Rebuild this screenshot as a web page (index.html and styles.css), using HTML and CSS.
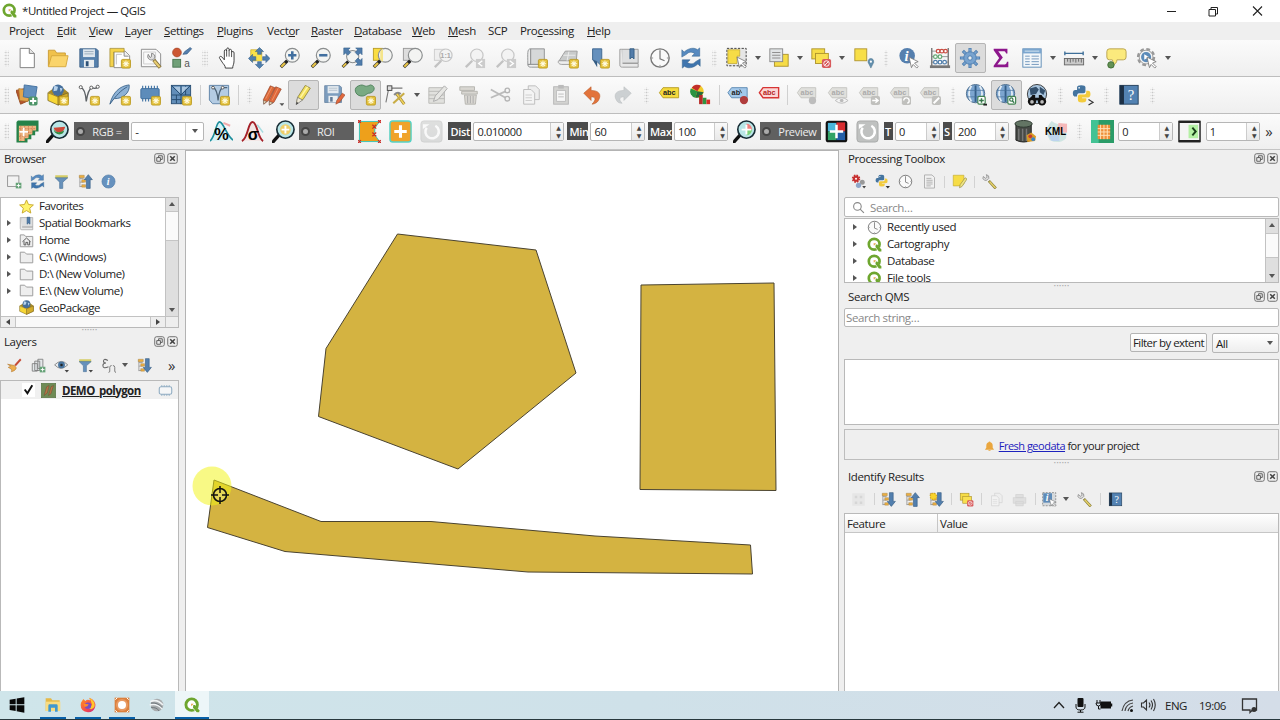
FILE: index.html
```html
<!DOCTYPE html>
<html lang="en">
<head>
<meta charset="utf-8">
<title>*Untitled Project — QGIS</title>
<link rel="stylesheet" href="styles.css">
</head>
<body>
<svg class="sprite" width="0" height="0">
<defs>
<linearGradient id="gf" x1="0" y1="0" x2="1" y2="1"><stop offset="0" stop-color="#ff9a1f"/><stop offset=".6" stop-color="#f5484b"/><stop offset="1" stop-color="#c62a86"/></linearGradient>
<g id="badge"><rect x="13.500" y="13.500" width="10" height="9.500" rx="1.500" fill="#e3c03a" stroke="#b8961c" stroke-width=".9"/><path d="M18.500 14.800v7M15 18.300h7M16 15.800l5 5M21 15.800l-5 5" stroke="#fffbe0" stroke-width="1.100"/></g>
<g id="lens"><path d="M2 22l7-7" stroke="#333" stroke-width="3.600"/><path d="M2.500 21.500l4-4" stroke="#e8c547" stroke-width="2.400"/><path d="M7 17l2-2" stroke="#222" stroke-width="2.600"/><circle cx="14.500" cy="9" r="7.600" fill="#f3f4f2" stroke="#8a8d8e" stroke-width="1.300"/></g>
<g id="handglass"><path d="M2 22l7-7" stroke="#c2c2c2" stroke-width="2.500"/><circle cx="14" cy="9" r="6.800" fill="#f3f3f3" stroke="#c6c6c6" stroke-width="1.300"/></g>
<g id="cursor"><path d="M12 11l10 5-4 1.500 4 4-1.500 1.500-4-4-1.800 3.500z" fill="#fff" stroke="#777" stroke-width=".9"/></g>
<g id="globe"><circle cx="11.500" cy="10.500" r="10" fill="#7ca5cf" stroke="#47698a"/><path d="M7 2C3.500 7 3.500 14 7 19M16 2c3.500 5 3.500 12 0 17" fill="none" stroke="#e3edf5" stroke-width="2"/><path d="M11.500 1.500v18" stroke="#345e87" stroke-width="2"/><path d="M2 7h19M2 14h19" stroke="#456f97" stroke-width=".7"/></g>

<symbol id="q" viewBox="0 0 24 24"><circle cx="11.500" cy="11.500" r="8.600" fill="#fff" stroke="#6ea62f" stroke-width="4.300"/><path d="M13 10.500l10.500 9.500v3.500h-5L10.500 14z" fill="#fff"/><path d="M14 12l2.500 0 6.500 8v3h-4L13.500 16z" fill="#6ea62f"/><path d="M10.500 10h4l-3.500 4z" fill="#e7a44a"/></symbol>
<symbol id="new" viewBox="0 0 24 24"><path d="M4.500 1.500h10l5.500 5.500v15.500h-15.500z" fill="#fff" stroke="#777"/><path d="M14.500 1.500v5.500h5.500" fill="#e5e5e5" stroke="#777"/></symbol>
<symbol id="open" viewBox="0 0 24 24"><path d="M1.500 21V3.500h7l2 3h9.500V10" fill="#f0c14b" stroke="#c99a32"/><path d="M1.500 21.500L5 9.500h18l-2.500 12z" fill="#fad46b" stroke="#d4a63c"/></symbol>
<symbol id="save" viewBox="0 0 24 24"><path d="M2 2h18l2 2v18H2z" fill="#5580ac" stroke="#3f638a"/><rect x="5.500" y="2.500" width="13" height="8.500" fill="#dfe7ee"/><path d="M7 5h10M7 7.500h10" stroke="#96a8b8"/><rect x="6.500" y="14" width="11" height="8" fill="#e9edf0"/><rect x="8.500" y="15.500" width="3" height="5.500" fill="#2f5278"/></symbol>
<symbol id="layout" viewBox="0 0 24 24"><path d="M5.500 4.500h12l5 5v13h-17z" fill="#fff" stroke="#888"/><path d="M1 1.500h15.500v4H5v16H1z" fill="#f5d34c" stroke="#a08a33" stroke-width=".8"/><path d="M16.500 5v5h5" fill="#eee" stroke="#888"/><path d="M8 8h6M8 8v11" stroke="#bbb"/><use href="#badge"/></symbol>
<symbol id="layoutm" viewBox="0 0 24 24"><path d="M1.500 2.500h16l5 5v14h-21z" fill="#fafafa" stroke="#888"/><path d="M4 5.500h13v13H4z" fill="none" stroke="#ccc"/><path d="M15 14l7 8.500" stroke="#84703a" stroke-width="4"/><path d="M15.500 15l6 7" stroke="#e9ce72" stroke-width="2.200"/><path d="M9 8c-2 4 1.500 7 5 6l2-2c1-3-1-5-3.500-5v3.500l-1.500 1z" fill="#ddd" stroke="#777" stroke-width=".9"/></symbol>
<symbol id="style" viewBox="0 0 24 24"><circle cx="6.500" cy="6" r="4.800" fill="#cc5733" stroke="#a13f20" stroke-width=".7"/><path d="M13 8l2-3 6-4.500 1.500 1.500-5 5.500z" fill="#557fae" stroke="#355b82" stroke-width=".7"/><rect x="2" y="13.500" width="8.500" height="8.500" fill="#70a078" stroke="#477450"/><text x="14.500" y="22" class="glyph gray">a</text></symbol>
<symbol id="hand" viewBox="0 0 24 24"><path d="M8 14V4.500c0-2 2.500-2 2.500 0V2.500c0-2 2.700-2 2.700 0V4c0-2 2.700-2 2.700 0v2c.5-1.700 2.700-1.500 2.700.5V15c0 4-1.500 5-1.500 8h-8c0-3-2-4-3.500-6.500L3 12.500c-1.200-2 1-3 2.500-1.500z" fill="#fff" stroke="#333" stroke-width="1"/><path d="M10.500 4.500v6M13.200 4v6.500M15.900 6v5" stroke="#333" stroke-width=".9"/></symbol>
<symbol id="pansel" viewBox="0 0 24 24"><path d="M3 3h12v12H3z" fill="#fbe24a" stroke="#c9a92b" stroke-width=".8"/><path d="M12.500.5l4.500 4.500h-2.500v3h-4V5H8zM12.500 23.500L8 19h2.500v-3h4v3H17zM.5 12.500L5 8v2.500h3.500v4H5V17zM24 12.500L19.500 8v2.500H16v4h3.500V17z" fill="#4f7eae" stroke="#315d87" stroke-width=".6"/><path d="M10 10h5v5h-5z" fill="#fbe24a"/></symbol>
<symbol id="zin" viewBox="0 0 24 24"><use href="#lens"/><path d="M14.500 4.500v9M10 9h9" stroke="#416f9f" stroke-width="2.800"/></symbol>
<symbol id="zout" viewBox="0 0 24 24"><use href="#lens"/><path d="M10 9h9" stroke="#416f9f" stroke-width="2.800"/></symbol>
<symbol id="zfull" viewBox="0 0 24 24"><g transform="translate(0 2.500) scale(.88)"><use href="#lens"/></g><path d="M3 1h7L8 3l2.500 3-3 3L5 6.500 3 8.500zM23 1h-7l2 2-2.500 3 3 3L21 6.500l2 2zM23 20h-7l2-2-2.500-3 3-3 2.500 2.500 2-2z" fill="#4f7cab" stroke="#315d87" stroke-width=".6"/></symbol>
<symbol id="zsel" viewBox="0 0 24 24"><rect x="1.500" y="1.500" width="10" height="13" fill="#fadd41" stroke="#b99c28"/><use href="#lens"/><path d="M9 4.500q2-2.500 3-2.500v14q-2-.5-3-2.500z" fill="#f5e58a"/></symbol>
<symbol id="zlay" viewBox="0 0 24 24"><rect x="1.500" y="1.500" width="12" height="13" fill="#ddd" stroke="#999"/><use href="#lens"/></symbol>
<symbol id="znat" viewBox="0 0 24 24"><rect x="1.500" y="2.500" width="11" height="12" fill="#eee" stroke="#ccc"/><use href="#handglass"/><text x="8" y="12" class="glyph tiny dim">1:1</text></symbol>
<symbol id="zprev" viewBox="0 0 24 24"><use href="#handglass"/><rect x="13" y="13" width="10" height="10" fill="#ccc"/><path d="M20 15l-4 3 4 3" stroke="#fff" fill="none" stroke-width="1.500"/></symbol>
<symbol id="znext" viewBox="0 0 24 24"><use href="#handglass"/><rect x="13" y="13" width="10" height="10" fill="#ccc"/><path d="M16 15l4 3-4 3" stroke="#fff" fill="none" stroke-width="1.500"/></symbol>
<symbol id="newmap" viewBox="0 0 24 24"><path d="M5 2h15v17H5z" fill="#d6d8d9" stroke="#8e9192"/><path d="M5 2c-4 0-3 5-3 17h3zM2 19c0 3 2 3 4 3h9v-3z" fill="#eee" stroke="#8e9192"/><use href="#badge"/></symbol>
<symbol id="new3d" viewBox="0 0 24 24"><path d="M9 4.500h13l-1 11H2z" fill="#c9cbcb" stroke="#999"/><path d="M2 15c-2 2 1 4 3 4h11v-4z" fill="#eee" stroke="#999"/><path d="M7 9h13M13 5l-2 10" stroke="#eee"/><use href="#badge"/></symbol>
<symbol id="newbm" viewBox="0 0 24 24"><path d="M5 2h10v19l-5-5-5-2z" fill="#6590bd" stroke="#3c658e"/><path d="M5 14l5 8V16z" fill="#335b82"/><use href="#badge"/></symbol>
<symbol id="bm" viewBox="0 0 24 24"><path d="M4 2.500h18v15H4z" fill="#dedfe0" stroke="#999"/><path d="M4 2.500H2v17c0 2 1 2.500 3 2.500h17v-4H5" fill="#e8e8e8" stroke="#999"/><path d="M13 2h4.500v11l-2.200-2-2.300 2z" fill="#537daa" stroke="#355f86"/></symbol>
<symbol id="clock" viewBox="0 0 24 24"><circle cx="12" cy="12" r="10" fill="#fafafa" stroke="#777" stroke-width="1.500"/><path d="M12 4v9l5 2" fill="none" stroke="#777" stroke-width="1.300"/><path d="M12 2.500v2M12 19.500v2M2.500 12h2M19.500 12h2" stroke="#888"/></symbol>
<symbol id="refresh" viewBox="0 0 24 24"><path d="M2 11V3l2.500 2.500C10 .5 16 .5 19 3l2.500-2V10H13l3-3c-4-2-6-2-9 1z" fill="#578ac0" stroke="#37658f" stroke-width=".6"/><path d="M22 13v8l-2.500-2.500C14 23.500 8 23.500 5 21l-2.500 2V14H11l-3 3c4 2 6 2 9-1z" fill="#3f75ae" stroke="#37658f" stroke-width=".6"/></symbol>
<symbol id="sel" viewBox="0 0 24 24"><rect x="1" y="1.500" width="21" height="19" fill="#e6e6e6" stroke="#333" stroke-dasharray="2.500 1.500"/><path d="M2 3h13v7h-3v8H2z" fill="#f6dc46" stroke="#bca126" stroke-width=".7"/><use href="#cursor"/></symbol>
<symbol id="selval" viewBox="0 0 24 24"><rect x="7" y="8" width="15" height="13" fill="#f6dc46" stroke="#ad932c"/><rect x="2" y="2" width="14" height="14" fill="#e1e4e6" stroke="#888"/><path d="M4.500 6h9M4.500 9h9M4.500 12h9" stroke="#888"/></symbol>
<symbol id="desel" viewBox="0 0 24 24"><rect x="2" y="2" width="14" height="11" fill="#f6dc46" stroke="#ad932c"/><rect x="6" y="7" width="14" height="11" fill="#f9e04f" stroke="#ad932c"/><rect x="13" y="13" width="10" height="10" rx="2" fill="#d85a5c"/><circle cx="18" cy="18" r="3" fill="none" stroke="#fff"/><path d="M16 20l4-4" stroke="#fff"/></symbol>
<symbol id="selloc" viewBox="0 0 24 24"><rect x="2" y="2" width="13" height="13" fill="#f8df48" stroke="#b19430"/><path d="M19.500 23l-3-6c-1-6 7-6 6 0z" fill="#638fad" stroke="#406c88" stroke-width=".5"/><circle cx="19.500" cy="16" r="1.200" fill="#fff"/></symbol>
<symbol id="info" viewBox="0 0 24 24"><circle cx="10" cy="9.500" r="8.500" fill="#557fae"/><text x="7" y="15" class="glyph serif white">i</text><use href="#cursor"/></symbol>
<symbol id="abacus" viewBox="0 0 24 24"><path d="M3 1v20M21 1v20" stroke="#777" stroke-width="1.500"/><path d="M1 21.500h22" stroke="#777" stroke-width="3"/><path d="M3 4.500h18M3 10.500h18M3 16.500h18" stroke="#777" stroke-width=".8"/><g fill="#fff" stroke-width="1.400"><g stroke="#c94d42"><circle cx="10" cy="4.500" r="2"/><circle cx="18" cy="4.500" r="2"/><circle cx="14" cy="4.500" r="2"/></g><g stroke="#63a873"><circle cx="7" cy="10.500" r="2"/><circle cx="12" cy="10.500" r="2"/></g><g stroke="#517fac"><circle cx="7" cy="16.500" r="2"/><circle cx="12" cy="16.500" r="2"/><circle cx="17" cy="16.500" r="2"/></g></g></symbol>
<symbol id="gear" viewBox="0 0 24 24"><path d="M12 1v22M1 12h22M4.200 4.200l15.600 15.600M19.800 4.200L4.200 19.800" stroke="#4f7fb0" stroke-width="3.400"/><path d="M12 2v20M2 12h20M4.900 4.900l14.200 14.200M19.100 4.900L4.900 19.100" stroke="#78a3cf" stroke-width="1.800"/><circle cx="12" cy="12" r="6.800" fill="#78a3cf" stroke="#4f7fb0"/><circle cx="12" cy="12" r="2.400" fill="#e8ecef" stroke="#4679ad"/></symbol>
<symbol id="sigma" viewBox="0 0 24 24"><path d="M4 2h15v5h-1.500c-.5-2-1-2.500-3-2.500H9l5 7-6 7.500h7c2 0 3-.5 3.500-3H20v6H4v-1.500L10 12 4 3.500z" fill="#8d178c"/></symbol>
<symbol id="table" viewBox="0 0 24 24"><rect x="2" y="2" width="20" height="20" fill="#f3f7fa" stroke="#5c89b4"/><path d="M2 2h20v5H2z" fill="#7ba6cf"/><path d="M4 4.500h16" stroke="#dceaf4"/><path d="M4.500 10h5M11.500 10h8M4.500 13h5M11.500 13h8M4.500 16h5M11.500 16h8M4.500 19h5M11.500 19h8" stroke="#6b93ba"/></symbol>
<symbol id="ruler" viewBox="0 0 24 24"><path d="M2 7h20M2 5v4M22 5v4" stroke="#3e6f99" stroke-width="1.500"/><rect x="1.500" y="12.500" width="21" height="7" fill="#c9c9c9" stroke="#666"/><path d="M5 13v3M8 13v4M11 13v3M14 13v4M17 13v3M20 13v4" stroke="#666"/></symbol>
<symbol id="tip" viewBox="0 0 24 24"><path d="M5 2h15q3 0 3 3v6q0 3-3 3h-7c0 3-2 5-5 6 1-3 1-4 0-6H5q-3 0-3-3V5q0-3 3-3z" fill="#fbea7d" stroke="#b7a14d"/><circle cx="6.500" cy="19.500" r="3.500" fill="#639155" stroke="#406d35"/></symbol>
<symbol id="action" viewBox="0 0 24 24"><circle cx="11" cy="11" r="8.500" fill="#eee" stroke="#999" stroke-width="3" stroke-dasharray="4 2.675"/><circle cx="11" cy="11" r="7.500" fill="#f3f3f3" stroke="#999"/><circle cx="11" cy="11" r="5.500" fill="#5c8bb9"/><path d="M9 8l5 3-5 3z" fill="#fff"/><use href="#cursor"/></symbol>

<symbol id="dsm" viewBox="0 0 24 24"><path d="M0 7l10-2 4 13-9 4z" fill="#b5562c" stroke="#96461e"/><path d="M3 5l13 2-3 12-9-1z" fill="#e3a54a" stroke="#a8722c" stroke-width=".7"/><path d="M9 1l14 2-2 13-13-2z" fill="#6390be" stroke="#416f9e"/><rect x="14" y="13.500" width="9.500" height="10" rx="2" fill="#4c9467"/><path d="M18.700 15v7M15.200 18.500h7" stroke="#fff" stroke-width="2"/></symbol>
<symbol id="gpkg" viewBox="0 0 24 24"><path d="M1 9l6-4h11l5 4-11 5z" fill="#a98a25"/><circle cx="12" cy="6.800" r="6.300" fill="#456f9c"/><path d="M8 2l4 1-1 4-4 1zM14 4l3 1-2 4z" fill="#b8d3ec"/><path d="M1 9.500l11 4.500 11-4.500v8.500l-11 5-11-5z" fill="#f6d636" stroke="#735e20" stroke-width=".8"/><path d="M12 14v9l11-5V9.500z" fill="#d3ad2b" stroke="#735e20" stroke-width=".8"/></symbol>
<symbol id="gpkgn" viewBox="0 0 24 24"><use href="#gpkg" width="24" height="24"/><use href="#badge"/></symbol>
<symbol id="shp" viewBox="0 0 24 24"><path d="M3 4q5 1 6 15Q11 6 15 4M15 4q4 2 7-1" fill="none" stroke="#5e6367" stroke-width="1.500"/><g fill="#fff" stroke="#555"><circle cx="3" cy="3.500" r="1.700"/><circle cx="14.500" cy="4" r="1.700"/><circle cx="21.500" cy="3" r="1.700"/></g><use href="#badge"/></symbol>
<symbol id="feather" viewBox="0 0 24 24"><path d="M1 22C4 9 12 2 22 1c1 9-7 15-16 15" fill="#8db2d6" stroke="#41698f"/><path d="M1 22C8 12 13 7 20 3" fill="none" stroke="#385d82"/><use href="#badge"/></symbol>
<symbol id="chip" viewBox="0 0 24 24"><path d="M4 2v17M7.200 2v17M10.400 2v17M13.600 2v17M16.800 2v17M20 2v17" stroke="#4879a8" stroke-width="1.300"/><rect x="2" y="5" width="20" height="11" rx="1" fill="#5d8cba" stroke="#416f9e"/><use href="#badge"/></symbol>
<symbol id="mesh" viewBox="0 0 24 24"><rect x="1.500" y="1.500" width="21" height="20" fill="#628eb9" stroke="#294e74"/><path d="M12 2v20M2 12h20M2 2l10 10M12 12l10-10M7 12v9M17 2v10M2 17h10" stroke="#244a6e"/><path d="M4 3h7v7zM13 3h7l-7 7z" fill="#a9c5df"/><use href="#badge"/></symbol>
<symbol id="virt" viewBox="0 0 24 24"><path d="M1.500 1.500h21v20H5l-3.500-4z" fill="#b4cce3" stroke="#5b80a5"/><path d="M6 4q4 2 5 14 1-12 5-14h5" fill="none" stroke="#4d6478" stroke-width="1.400"/><g fill="#fff" stroke="#555"><circle cx="5.500" cy="4" r="1.500"/><circle cx="16" cy="4" r="1.500"/></g><use href="#badge"/></symbol>
<symbol id="pencils" viewBox="0 0 24 24"><g stroke="#8d3c1f" stroke-width=".7"><path d="M1.500 17L9 2l5 2-7 14-5 4z" fill="#dd6a3a"/><path d="M8 18l7-15 6 2.500-8 14.500-5 3z" fill="#e0673a"/></g><path d="M4 16l7-13M11 18l7-14" stroke="#f0966b" stroke-width="1"/><path d="M1.500 18l3.500 1-3.300 3zM8 19l4 1.500-4 2.500z" fill="#e9d9b8" stroke="#555" stroke-width=".5"/><path d="M19 21h5.500l-2.700 3z" fill="#555"/></symbol>
<symbol id="pencil" viewBox="0 0 24 24"><path d="M5 20l1.500-6L14.500 1.500l5.500 3L12 17z" fill="#f2df5b" stroke="#958c45"/><path d="M9 15L17 3" stroke="#fff5a2" stroke-width="1.500"/><path d="M4.500 22.500l1.500-8 5.500 3z" fill="#eee9d8" stroke="#777" stroke-width=".8"/><path d="M4.500 22.500l.6-3 2 1.200z" fill="#333"/></symbol>
<symbol id="savee" viewBox="0 0 24 24"><g opacity=".75"><use href="#save" width="22" height="22"/></g><path d="M14 22l1-4 6-8 3 2-6 8z" fill="#e1683d" stroke="#96411f" stroke-width=".6"/></symbol>
<symbol id="addpoly" viewBox="0 0 24 24"><path d="M5 2c7-3 5 3 13-1 6 1 5 8-1 9-4 0-4 4-10 3C1 12-1 4 5 2z" fill="#79aa83" stroke="#4e805b"/><use href="#badge"/></symbol>
<symbol id="vertex" viewBox="0 0 24 24"><path d="M4 5L1 20M5 4.500h14" stroke="#777" stroke-width="1.200"/><rect x="2.500" y="2" width="5" height="5" fill="#ddd" stroke="#444"/><path d="M10 12q4-4 7-1" fill="none" stroke="#888" stroke-width="2.500"/><path d="M13 11l8 11" stroke="#9b8137" stroke-width="3.200"/><path d="M13 11l8 11" stroke="#efd25a" stroke-width="1.800"/><path d="M21 10L9 21" stroke="#c9ad45" stroke-width="2.300"/></symbol>
<symbol id="multi" viewBox="0 0 24 24"><path d="M2 4h17v17H2zM2 8h17M2 12h17M2 16h17" fill="#e1e1de" stroke="#b9b9b6"/><path d="M7 19l2-6L19 2l3 3-10 12z" fill="#e6e6e3" stroke="#aaa"/></symbol>
<symbol id="trash" viewBox="0 0 24 24"><path d="M2 3h16v4H2zM4 8h17v3H4zM7 12h13l-1 10H8z" fill="#d9d7d2" stroke="#b5b3ae"/><path d="M10.500 13v8M13.500 13v8M16.500 13v8" stroke="#aaa"/></symbol>
<symbol id="cut" viewBox="0 0 24 24"><path d="M2 6l16 9M2 15l16-7" stroke="#bbb" stroke-width="2"/><circle cx="20" cy="7" r="2.500" fill="none" stroke="#b5b5b5" stroke-width="1.500"/><circle cx="20" cy="16" r="2.500" fill="none" stroke="#b5b5b5" stroke-width="1.500"/></symbol>
<symbol id="copy" viewBox="0 0 24 24"><path d="M9 2h8l4 4v11H9z" fill="#eee" stroke="#bbb"/><path d="M4 6h8l4 4v12H4z" fill="#f4f4f4" stroke="#bbb"/><path d="M6 12h7M6 15h7M6 18h7" stroke="#ccc"/></symbol>
<symbol id="paste" viewBox="0 0 24 24"><rect x="4" y="3" width="16" height="19" fill="#d4d4d2" stroke="#b5b5b5"/><path d="M7 7h10v12H7z" fill="#f6f6f6" stroke="#bbb"/><rect x="9" y="1" width="6" height="4" fill="#bbb"/><path d="M9 11h6M9 14h6" stroke="#bbb"/></symbol>
<symbol id="undo" viewBox="0 0 24 24"><path d="M3 10l8-7v4c8 0 12 4 8 11-1 2-4 4-7 4 5-5 4-8-1-8v4z" fill="#e2733b" stroke="#b5551f" stroke-width=".6"/></symbol>
<symbol id="redo" viewBox="0 0 24 24"><path d="M21 10l-8-7v4c-8 0-12 4-8 11 1 2 3 3 6 3-4-4-3-7 2-7v4z" fill="#ccd0d2" stroke="#b9bdbf" stroke-width=".6"/></symbol>
<symbol id="labs" viewBox="0 0 24 24"><path d="M1.500 9.500l4-5.500h17v11H5.500z" fill="#f5da3c" stroke="#b69c22"/><text x="5.500" y="12" class="glyph tiny">abc</text></symbol>
<symbol id="diag" viewBox="0 0 24 24"><circle cx="9" cy="8" r="7" fill="#f1cb2d"/><path d="M9 8L2 5a7 7 0 0 0 5 10z" fill="#2b9442"/><path d="M9 8L3 4a7 7 0 0 1 10-2z" fill="#c22e2a"/><path d="M9 8L7 15q5 1 9-6z" fill="#256d3c"/><path d="M11 12h4v10h-4z" fill="#b72a26"/><path d="M15 15h4v7h-4z" fill="#2f9440"/><path d="M19 17h4v5h-4z" fill="#d62f28"/></symbol>
<symbol id="labpin" viewBox="0 0 24 24"><path d="M1 9.500l4-5.500h17v11H5z" fill="#a3c9eb" stroke="#5a88b1"/><text x="5" y="12" class="glyph tiny">ab</text><path d="M16 10l-2-4" stroke="#444"/><circle cx="18.500" cy="17.500" r="4.500" fill="#b03c3c"/></symbol>
<symbol id="labred" viewBox="0 0 24 24"><path d="M1.500 9.500l4-5.500h17v11H5.500z" fill="#fbd6d5" stroke="#d73534" stroke-width="1.500"/><text x="5.500" y="12" class="glyph tiny red">abc</text></symbol>
<symbol id="labdim" viewBox="0 0 24 24"><path d="M1.500 9.500l4-5.500h16v11H5.500z" fill="#e0e0dc" stroke="#c5c5c1"/><text x="5" y="12" class="glyph tiny dim">abc</text></symbol>
<symbol id="labpind" viewBox="0 0 24 24"><use href="#labdim" width="24" height="24"/><circle cx="18" cy="18" r="4" fill="#bdbdbd"/></symbol>
<symbol id="labeye" viewBox="0 0 24 24"><use href="#labdim" width="24" height="24"/><path d="M9 18q7-6 14 0-7 6-14 0" fill="#f3f3f3" stroke="#bbb"/><circle cx="16" cy="18" r="2" fill="#bbb"/></symbol>
<symbol id="labmv" viewBox="0 0 24 24"><use href="#labdim" width="24" height="24"/><rect x="14" y="13" width="10" height="10" rx="2" fill="#c0c0bd"/><path d="M15.500 18h6M19 15.500l3 2.500-3 2.500" stroke="#fff" stroke-width="1.500" fill="none"/></symbol>
<symbol id="labrot" viewBox="0 0 24 24"><use href="#labdim" width="24" height="24"/><rect x="14" y="13" width="10" height="10" rx="2" fill="#c0c0bd"/><path d="M20 21a3 3 0 1 0-4-3" stroke="#fff" stroke-width="1.500" fill="none"/></symbol>
<symbol id="labed" viewBox="0 0 24 24"><use href="#labdim" width="24" height="24"/><rect x="14" y="13" width="10" height="10" rx="2" fill="#c0c0bd"/><path d="M16 21l6-6" stroke="#fff" stroke-width="2"/></symbol>
<symbol id="globep" viewBox="0 0 24 24"><use href="#globe"/><rect x="14" y="13.500" width="8" height="8.500" rx="1.500" fill="#fff" stroke="#438452" stroke-width="1.300"/><path d="M18 15.500v5M15.500 18h5" stroke="#35774b" stroke-width="1.600"/><path d="M20 22.500h4" stroke="#222" stroke-width="2"/></symbol>
<symbol id="globes" viewBox="0 0 24 24"><use href="#globe"/><rect x="14" y="13.500" width="8.500" height="8.500" rx="1.500" fill="#fff" stroke="#438452" stroke-width="1.300"/><circle cx="17.800" cy="17" r="1.800" fill="none" stroke="#35774b" stroke-width="1.300"/><path d="M19 18.500l2 2" stroke="#35774b" stroke-width="1.500"/></symbol>
<symbol id="globeb" viewBox="0 0 24 24"><circle cx="12" cy="11" r="10.500" fill="#a9c5de" stroke="#333"/><path d="M4 5l7-2 3 3-3 5-6 1zM15 3l6 4-2 5-4-3z" fill="#34506c"/><circle cx="6.500" cy="19" r="4.500" fill="#111"/><circle cx="17.500" cy="19" r="4.500" fill="#111"/><path d="M7 12h3v3h4v-3h3l4 6H3z" fill="#111"/><circle cx="6.500" cy="19.500" r="2" fill="#bbb"/><circle cx="17.500" cy="19.500" r="2" fill="#bbb"/></symbol>
<symbol id="py" viewBox="0 0 24 24"><path d="M6 7V4q0-2.500 5-2.500t5 2.500v5q0 2-2.500 2H8q-2 0-2 3v1H4q-3 0-3-4t3-4h7" fill="#44749f"/><path d="M17 8h2q3 0 3 4t-3 4h-7v1h5v2q0 3-5 3t-5-3v-4q0-2.500 2.500-2.500H15q2 0 2-3z" fill="#f3cb3d"/><circle cx="8.500" cy="4.500" r="1" fill="#fff"/></symbol>
<symbol id="pyc" viewBox="0 0 24 24"><use href="#py" width="22" height="22"/><path d="M18 17l5 3-5 3" fill="none" stroke="#333" stroke-width="1.200"/></symbol>
<symbol id="help" viewBox="0 0 24 24"><rect x="2" y="1.500" width="20" height="20.500" fill="#5382b2" stroke="#223e59"/><path d="M2 1.500h4.500v20.500H2z" fill="#1d3045"/><text x="10.500" y="17" class="glyph quest white">?</text></symbol>

<symbol id="scp" viewBox="0 0 24 24"><path d="M2 .5h21.500V12H20v4h-4v4h-4v3.500H.5V2z" fill="#258249"/><path d="M3 6h18v5h-4v4h-4v4H9v3H3z" fill="#efb681"/><path d="M5 6v16M9 6v16M13 6v11M17 6v7M3 9h18M3 13h13M3 17h10" stroke="#c87950" stroke-width=".8" stroke-dasharray="2 1"/><path d="M8 8v9M3.500 12.500h9" stroke="#fff" stroke-width="1.800"/></symbol>
<symbol id="glass" viewBox="0 0 24 24"><path d="M0 24l8-9" stroke="#111" stroke-width="3.500"/><circle cx="14" cy="10" r="9" fill="#b9e6e7" stroke="#172c35" stroke-width="1.700"/></symbol>
<symbol id="scpz" viewBox="0 0 24 24"><use href="#glass" width="24" height="24"/><path d="M8 8l12-1q-1 6-7 6-4-1-5-5z" fill="#cf4a3a"/><path d="M8 10q3 5 11 1-1 4-5 4-5 0-6-5z" fill="#398a42"/></symbol>
<symbol id="pct" viewBox="0 0 24 24"><path d="M0 22C6 17 6 2 10 2s7 14 14 19z" fill="#d5f3f6"/><path d="M0 22C6 17 6 2 10 2s7 14 14 19" fill="none" stroke="#1d8d9b" stroke-width="1.700"/><path d="M14 3l7 3" stroke="#f0a9a9" stroke-width="2"/><text x="4.500" y="20.500" class="glyph big">%</text></symbol>
<symbol id="std" viewBox="0 0 24 24"><path d="M1 22C8 18 7 2 12 2s5 16 11 20" fill="#f3e6e5" stroke="#a42028" stroke-width="2"/><path d="M17 5l6 8" stroke="#a5dce1" stroke-width="1.500"/><text x="7" y="20.500" class="glyph big">σ</text></symbol>
<symbol id="roiz" viewBox="0 0 24 24"><use href="#glass" width="24" height="24"/><circle cx="14" cy="10" r="5.500" fill="#efcf6a"/><path d="M14 6v8M10 10h8" stroke="#fff" stroke-width="2"/></symbol>
<symbol id="roi" viewBox="0 0 24 24"><path d="M1.500 1.500h21l-5 7v7l5 7h-21z" fill="#eea01b" stroke="#36c5bc"/><path d="M0 0l3 3M3 0L0 3M0 21l3 3M3 21l-3 3M21 0l3 3M24 0l-3 3M15 5l4 4M19 5l-4 4M15 13l4 4M19 13l-4 4M21 21l3 3M24 21l-3 3" stroke="#cc2c26" stroke-width="1.300"/></symbol>
<symbol id="plus" viewBox="0 0 24 24"><rect x="1" y="1" width="22" height="22" rx="3" fill="#f0a329" stroke="#55d2c5" stroke-width="1.500"/><path d="M12 5.500v13M5.500 12h13" stroke="#fff" stroke-width="3.200"/></symbol>
<symbol id="redo2" viewBox="0 0 24 24"><rect x="1" y="1" width="22" height="22" rx="3" fill="#bfc1c0" stroke="#a9abaa"/><path d="M7 8a7 7 0 1 0 9-2" fill="none" stroke="#fff" stroke-width="2.600"/><path d="M3 9.500V4.500h7z" fill="#fff"/></symbol>
<symbol id="prez" viewBox="0 0 24 24"><use href="#glass" width="24" height="24"/><path d="M14 10h6q-1 6-6 6z" fill="#7cd279"/><path d="M14 10h6q-1-6-6-6z" fill="#ef8280"/><path d="M14 5v10M9 10h10" stroke="#fff" stroke-width="2"/></symbol>
<symbol id="rgb" viewBox="0 0 24 24"><rect x=".7" y=".7" width="22.600" height="22.600" rx="3" fill="#111"/><path d="M3 3h9v9H3z" fill="#49b5da"/><path d="M12 2.500h9V12h-9z" fill="#d72d30"/><path d="M3 12h9v9H3z" fill="#33a466"/><path d="M12 12h9v9h-9z" fill="#225ea7"/><path d="M12 5v14M5 12h14" stroke="#fff" stroke-width="2.600"/></symbol>
<symbol id="db" viewBox="0 0 24 24"><path d="M2 4v17q8 4 16 0V4" fill="#474a46" stroke="#222"/><ellipse cx="10" cy="4" rx="9" ry="3.500" fill="#637564" stroke="#2e3830"/><path d="M5 9v12M9 9v13M13 9v13" stroke="#777" stroke-width="1.500"/><path d="M13 16l5-3 5 4-1 5-8 1z" fill="#d99b25"/><circle cx="17" cy="17" r="2" fill="#c33a32"/><circle cx="20" cy="20" r="2" fill="#3983c9"/></symbol>
<symbol id="kml" viewBox="0 0 24 24"><path d="M7 1q8 6 16 3l-1 15q-7 7-17 2Q-2 10 7 1z" fill="#cfe5e2"/><path d="M14 3l9 1v9H13z" fill="#f5b9ba"/><path d="M3 15h12v7H7z" fill="#bdd4ee"/><text x="0" y="16" class="glyph kml" textLength="22" lengthAdjust="spacingAndGlyphs">KML</text></symbol>
<symbol id="gridi" viewBox="0 0 24 24"><rect width="24" height="24" fill="#2a9c68"/><path d="M0 0h8v24H0z" fill="#43c294"/><rect x="7" y="5" width="13" height="15" fill="#ef8f39"/><path d="M10 5v15M13.500 5v15M17 5v15M7 9h13M7 12.500h13M7 16h13" stroke="#ffe3b9"/></symbol>
<symbol id="go" viewBox="0 0 24 24"><rect x="1" y="1.500" width="22" height="21" fill="#f4f4f4" stroke="#222" stroke-width="1.500"/><path d="M1 2h22M1 22h22" stroke="#222" stroke-width="2.500"/><path d="M11 5h10v14H11z" fill="#b4f0a4"/><path d="M15 8l3.500 4-3.500 4" fill="none" stroke="#183f19" stroke-width="2"/></symbol>

<symbol id="addl" viewBox="0 0 24 24"><rect x="1" y="3" width="18" height="17" fill="#f2f2f2" stroke="#888" stroke-width="1.300"/><rect x="14" y="14" width="9" height="9" fill="#65a277"/><path d="M18.500 15.500v6M15.500 18.500h6" stroke="#fff" stroke-width="1.500"/></symbol>
<symbol id="funnel" viewBox="0 0 24 24"><path d="M2 2h20v5H2z" fill="#d5cd66"/><path d="M2 6h20l-8 7v10h-5V13z" fill="#6791bb" stroke="#4c7399"/></symbol>
<symbol id="coll" viewBox="0 0 24 24"><path d="M3 3v18M3 7h6M3 13h6M3 20h6" stroke="#999" stroke-width="1.400"/><path d="M2 2h8v4H2zM6 9h6v4H6zM6 17h6v4H6z" fill="#edae3d" stroke="#9d8151" stroke-width=".7"/><path d="M16.500 1l6.500 8h-3.500v14h-6V9H10z" fill="#527fae" stroke="#355c82"/></symbol>
<symbol id="expa" viewBox="0 0 24 24"><path d="M3 3v18M3 7h6M3 13h6M3 20h6" stroke="#999" stroke-width="1.400"/><path d="M2 2h8v4H2zM6 9h6v4H6zM6 17h6v4H6z" fill="#edae3d" stroke="#9d8151" stroke-width=".7"/><path d="M16.500 23l6.500-8h-3.500V1h-6v14H10z" fill="#527fae" stroke="#355c82"/></symbol>
<symbol id="expn" viewBox="0 0 24 24"><use href="#expa" width="24" height="24"/><circle cx="7" cy="7" r="5" fill="#f9d42d" stroke="#d7ac18" stroke-width="2" stroke-dasharray="2"/></symbol>
<symbol id="inf" viewBox="0 0 24 24"><circle cx="12" cy="12" r="10.500" fill="#6691be" stroke="#527da8"/><text x="9" y="18" class="glyph serif white">i</text></symbol>
<symbol id="star" viewBox="0 0 24 24"><path d="M12 1.500l3.200 7.300 7.800.8-5.900 5.200 1.800 7.700-6.900-4-6.900 4 1.800-7.700L1 9.600l7.800-.8z" fill="#fff36b" stroke="#c7a72b" stroke-width="1.500"/></symbol>
<symbol id="folder" viewBox="0 0 24 24"><path d="M2 20.500V3.500h7l3 3h10v14z" fill="#eee" stroke="#999" stroke-width="1.500"/></symbol>
<symbol id="home" viewBox="0 0 24 24"><path d="M2 22V3h6l3 2.500h11V22z" fill="#eee" stroke="#999" stroke-width="1.500"/><path d="M5.500 14l6.500-6 6.500 6M8 13v6h3v-4h3v4h3v-6" fill="none" stroke="#555" stroke-width="1.500"/></symbol>
<symbol id="brush" viewBox="0 0 24 24"><path d="M13 12L22 2" stroke="#c64c36" stroke-width="3"/><path d="M1 10l11 2 3 4q-2 5-8 6 1-3 0-4-3-2-5-3l4-2z" fill="#edae4d" stroke="#b67b34"/></symbol>
<symbol id="group" viewBox="0 0 24 24"><path d="M2 9h8v12H2zM6 5h8v15H6zM11 2h8v15h-8z" fill="#e4e8ea" stroke="#777" stroke-width="1.300"/><rect x="14" y="14" width="9" height="9" fill="#65a277"/><path d="M18.500 15.500v6M15.500 18.500h6" stroke="#fff" stroke-width="1.500"/></symbol>
<symbol id="eye" viewBox="0 0 24 24"><path d="M1 11q11-11 21 0-11 11-21 0" fill="#e9edf0" stroke="#888" stroke-width="1.500"/><circle cx="12" cy="11" r="5.500" fill="#49759f"/><circle cx="12" cy="11" r="2" fill="#222"/><path d="M17 19h7l-3.500 4z" fill="#444"/></symbol>
<symbol id="funneld" viewBox="0 0 24 24"><use href="#funnel" width="23" height="23"/><path d="M17 19h7l-3.500 4z" fill="#444"/></symbol>
<symbol id="eps" viewBox="0 0 24 24"><path d="M11 4Q4 0 4 5q0 3 4 3-5 0-5 4 0 6 9 2" fill="none" stroke="#666" stroke-width="1.700"/><path d="M17 12q-3 0-3 3v6q0 2-2 2M19 12q3 0 3 3v6q0 2 2 2" fill="none" stroke="#777" stroke-width="1.500"/></symbol>
<symbol id="layer" viewBox="0 0 24 24"><rect x=".5" y=".5" width="23" height="23" fill="#6f8b55" stroke="#54713f"/><path d="M5 20l4-14 4-2-3 12zM12 20l4-14 4-2-4 13z" fill="#b67445" stroke="#6b4632" stroke-width=".7"/></symbol>
<symbol id="mem" viewBox="0 0 24 24"><path d="M6 3.500v17M10 3.500v17M14 3.500v17M18 3.500v17" stroke="#9db7ca" stroke-width="2"/><rect x="2" y="6" width="20" height="12" rx="3" fill="#f5f6f7" stroke="#8eabc1" stroke-width="1.700"/></symbol>
<symbol id="gears" viewBox="0 0 24 24"><circle cx="8" cy="7.500" r="5" fill="#c73131" stroke="#c73131" stroke-width="3.500" stroke-dasharray="2.250 1.700"/><circle cx="8" cy="7.500" r="1.600" fill="#fff"/><circle cx="18" cy="13" r="4" fill="#999"/><circle cx="12" cy="18" r="4.200" fill="#8da6c9"/><path d="M18 19h6l-3 4z" fill="#444"/></symbol>
<symbol id="pyd" viewBox="0 0 24 24"><use href="#py" width="22" height="22"/><path d="M17 19h7l-3.500 4z" fill="#333"/></symbol>
<symbol id="doc" viewBox="0 0 24 24"><path d="M4 1.500h12l4 4v17H4z" fill="#f1f1f1" stroke="#aaa" stroke-width="1.400"/><path d="M7 7h8M7 10h10M7 13h10M7 16h10M7 19h7" stroke="#aaa" stroke-width="1.400"/></symbol>
<symbol id="noted" viewBox="0 0 24 24"><path d="M2 2h17v14l-5 3H2z" fill="#f6dc46" stroke="#c1a82f"/><path d="M12 22l1-5L21 6l3 2-8 12z" fill="#efe483" stroke="#8e8643"/></symbol>
<symbol id="wrench" viewBox="0 0 24 24"><path d="M11 11l11 12" stroke="#837936" stroke-width="4.500"/><path d="M12 12l9.500 10.500" stroke="#e4d069" stroke-width="2.600"/><path d="M2 4q-2 4 2 6 3 1 5-1l2-2q1-5-4-6l1 4-2 2z" fill="#ddd" stroke="#777"/></symbol>
<symbol id="mag" viewBox="0 0 24 24"><circle cx="10" cy="10" r="7" fill="none" stroke="#888" stroke-width="2"/><path d="M15 15l7 7" stroke="#888" stroke-width="2"/></symbol>
<symbol id="dimtree" viewBox="0 0 24 24"><rect x="2" y="2" width="20" height="20" fill="#e6e6e6"/><path d="M6 6h4v4H6zM14 6h4v4h-4zM6 15h4v4H6zM14 15h4v4h-4z" fill="#d6d6d6"/></symbol>
<symbol id="print" viewBox="0 0 24 24"><path d="M6 4h12v5H6zM2 9h20v9H2zM6 15h12v7H6z" fill="#d5d5d5" stroke="#bbb"/></symbol>
<symbol id="idsel" viewBox="0 0 24 24"><rect x="1" y="1" width="21" height="21" fill="#d5d9dc" stroke="#666" stroke-dasharray="3 2"/><path d="M2 2h14v15H2z" fill="#5e8bb8"/><text x="6" y="15" class="glyph serif white">i</text><use href="#cursor"/></symbol>
<symbol id="bell" viewBox="0 0 24 24"><path d="M12 2q2 0 2 2 5 1 5 8v4l3 4H2l3-4v-4q0-7 5-8 0-2 2-2zM9 21h6q-3 4-6 0z" fill="#eaa63e"/></symbol>
<symbol id="float" viewBox="0 0 12 12"><rect x=".8" y=".8" width="10.400" height="10.400" rx="2" fill="#eee" stroke="#666"/><path d="M5 3h4v4H5z" fill="none" stroke="#555"/><path d="M3 5h4v4H3z" fill="#eee" stroke="#555"/></symbol>
<symbol id="close" viewBox="0 0 12 12"><rect x=".8" y=".8" width="10.400" height="10.400" rx="2" fill="#eee" stroke="#666"/><path d="M3.500 3.500l5 5M8.500 3.500l-5 5" stroke="#444" stroke-width="1.700"/></symbol>

<symbol id="win" viewBox="0 0 24 24"><path d="M1 4l9-1.500V11H1zM11.500 2.300L23 .5V11H11.500zM1 12.500h9V21l-9-1.500zM11.500 12.500H23V23.500l-11.500-2z" fill="#080808"/></symbol>
<symbol id="exp" viewBox="0 0 24 24"><path d="M1 2h8l2 3h11v16H1z" fill="#e6b947"/><path d="M1 7h22v14H1z" fill="#f8dc82"/><path d="M5 22v-9q0-2 2-2h10q2 0 2 2v9h-4v-6H9v6z" fill="#4098cf"/></symbol>
<symbol id="ff" viewBox="0 0 24 24"><path d="M3 6l2-3 3 3q3-3 7-1l-1-4q10 4 9 13-2 9-11 9Q1 22 1 12q0-4 2-6z" fill="url(#gf)"/><path d="M14 1q9 5 8 13-3 7-9 3l5-5q-1-6-4-11z" fill="#ffc82c"/><circle cx="12" cy="13" r="4.800" fill="#7650c5"/><path d="M5 10l8 1-2 3-4 1z" fill="#ff8b24"/></symbol>
<symbol id="rec" viewBox="0 0 24 24"><rect x="1" y="1" width="22" height="22" fill="#dc803d"/><circle cx="12" cy="12" r="9" fill="#e89a62"/><circle cx="12" cy="12" r="6" fill="#fff"/><path d="M2 4l3-3M19 1l3 3M2 20l3 3M22 20l-3 3" stroke="#fff" stroke-width="1.500"/></symbol>
<symbol id="earth" viewBox="0 0 24 24"><circle cx="12" cy="12" r="9.500" fill="#a7abad"/><path d="M2 7q10-5 19 5M1 12q11-3 19 6" stroke="#f1f4f5" stroke-width="2.500" fill="none"/><path d="M3 9q10-1 17 7M3 16q9-1 12 5" stroke="#70777c" stroke-width="1.500" fill="none"/></symbol>
</defs>
</svg>

<div class="app">
<header class="title"><svg class="q16"><use href="#q"/></svg><span>*Untitled Project — QGIS</span>
<svg class="winbtns" viewBox="0 0 100 20"><path d="M1 10.500h9M43 8.500h6.500v6.500H43zM45 8.500V6.500h6.500V13H49.500" fill="none" stroke="#222"/><path d="M87 5.500l9 9M96 5.500l-9 9" stroke="#222" stroke-width="1.100"/></svg></header>
<nav class="menu"><span>Project</span><span><u>E</u>dit</span><span><u>V</u>iew</span><span><u>L</u>ayer</span><span><u>S</u>ettings</span><span><u>P</u>lugins</span><span>Vect<u>o</u>r</span><span><u>R</u>aster</span><span><u>D</u>atabase</span><span><u>W</u>eb</span><span><u>M</u>esh</span><span>SCP</span><span>Pro<u>c</u>essing</span><span><u>H</u>elp</span></nav>

<div class="bar main">
<i class="grip first"></i>
<b><svg><use href="#new"/></svg></b><b><svg><use href="#open"/></svg></b><b><svg><use href="#save"/></svg></b><b><svg><use href="#layout"/></svg></b><b><svg><use href="#layoutm"/></svg></b><b><svg><use href="#style"/></svg></b>
<i class="grip"></i>
<b><svg><use href="#hand"/></svg></b><b><svg><use href="#pansel"/></svg></b><b><svg><use href="#zin"/></svg></b><b><svg><use href="#zout"/></svg></b><b><svg><use href="#zfull"/></svg></b><b><svg><use href="#zsel"/></svg></b><b><svg><use href="#zlay"/></svg></b><b><svg><use href="#znat"/></svg></b><b><svg><use href="#zprev"/></svg></b><b><svg><use href="#znext"/></svg></b><b><svg><use href="#newmap"/></svg></b><b><svg><use href="#new3d"/></svg></b><b><svg><use href="#newbm"/></svg></b><b><svg><use href="#bm"/></svg></b><b><svg><use href="#clock"/></svg></b><b><svg><use href="#refresh"/></svg></b>
<i class="grip"></i>
<b class="dd"><svg><use href="#sel"/></svg></b><b class="dd"><svg><use href="#selval"/></svg></b><b class="dd"><svg><use href="#desel"/></svg></b><b><svg><use href="#selloc"/></svg></b>
<i class="grip tight"></i>
<b><svg><use href="#info"/></svg></b><b><svg><use href="#abacus"/></svg></b><b class="on"><svg><use href="#gear"/></svg></b><b><svg><use href="#sigma"/></svg></b><b class="dd"><svg><use href="#table"/></svg></b><b class="dd"><svg><use href="#ruler"/></svg></b><b><svg><use href="#tip"/></svg></b><b class="dd"><svg><use href="#action"/></svg></b>
</div>

<div class="bar">
<i class="grip first"></i>
<b><svg><use href="#dsm"/></svg></b><b><svg><use href="#gpkgn"/></svg></b><b><svg><use href="#shp"/></svg></b><b><svg><use href="#feather"/></svg></b><b><svg><use href="#chip"/></svg></b><b><svg><use href="#mesh"/></svg></b>
<i class="sep"></i>
<b><svg><use href="#virt"/></svg></b>
<i class="sep"></i><i class="grip"></i>
<b><svg><use href="#pencils"/></svg></b><b class="on"><svg><use href="#pencil"/></svg></b><b><svg><use href="#savee"/></svg></b><b class="on"><svg><use href="#addpoly"/></svg></b><b class="dd"><svg><use href="#vertex"/></svg></b><b><svg><use href="#multi"/></svg></b><b><svg><use href="#trash"/></svg></b><b><svg><use href="#cut"/></svg></b><b><svg><use href="#copy"/></svg></b><b><svg><use href="#paste"/></svg></b><b><svg><use href="#undo"/></svg></b><b><svg><use href="#redo"/></svg></b>
<i class="grip"></i>
<b><svg><use href="#labs"/></svg></b><b><svg><use href="#diag"/></svg></b><i class="sep"></i><b><svg><use href="#labpin"/></svg></b><b><svg><use href="#labred"/></svg></b><i class="sep"></i><b><svg><use href="#labpind"/></svg></b><b><svg><use href="#labeye"/></svg></b><b><svg><use href="#labmv"/></svg></b><b><svg><use href="#labrot"/></svg></b><b><svg><use href="#labed"/></svg></b>
<i class="grip tight"></i>
<b><svg><use href="#globep"/></svg></b><b class="on"><svg><use href="#globes"/></svg></b><b><svg><use href="#globeb"/></svg></b><i class="grip"></i><b><svg><use href="#pyc"/></svg></b><i class="grip"></i><b><svg><use href="#help"/></svg></b><i class="grip"></i>
</div>

<div class="bar scp">
<i class="grip first"></i>
<b><svg><use href="#scp"/></svg></b><b><svg><use href="#scpz"/></svg></b><span class="tag w55 rgb"><em></em>RGB =</span><span class="combo">-<i class="dn"></i></span><b class="lead"><svg><use href="#pct"/></svg></b><b><svg><use href="#std"/></svg></b><b><svg><use href="#roiz"/></svg></b><span class="tag w55"><em></em>ROI</span><b><svg><use href="#roi"/></svg></b><b><svg><use href="#plus"/></svg></b><b class="faint"><svg><use href="#redo2"/></svg></b>
<span class="tag lab w24">Dist</span><span class="spin w92">0.010000</span><span class="tag lab w22">Min</span><span class="spin w55">60</span><span class="tag lab w25">Max</span><span class="spin w55">100</span>
<b><svg><use href="#prez"/></svg></b><span class="tag w62"><em></em>Preview</span><b><svg><use href="#rgb"/></svg></b><b><svg><use href="#redo2"/></svg></b>
<span class="tag lab w9 t">T</span><span class="spin w45">0</span><span class="tag lab w9">S</span><span class="spin w55">200</span>
<b class="store"><svg><use href="#db"/></svg></b><b><svg><use href="#kml"/></svg></b><i class="grip"></i><b><svg><use href="#gridi"/></svg></b><span class="spin w55">0</span><b><svg><use href="#go"/></svg></b><span class="spin w55">1</span><span class="more">»</span>
</div>

<main class="work">
<aside class="left">
<section class="dock browser">
<h2>Browser<span><svg><use href="#float"/></svg><svg><use href="#close"/></svg></span></h2>
<div class="tools"><b><svg><use href="#addl"/></svg></b><b><svg><use href="#refresh"/></svg></b><b><svg><use href="#funnel"/></svg></b><b><svg><use href="#coll"/></svg></b><b><svg><use href="#inf"/></svg></b></div>
<div class="box treebox">
<ul class="tree">
<li><i></i><svg><use href="#star"/></svg>Favorites</li>
<li><i class="tri"></i><svg><use href="#bm"/></svg>Spatial Bookmarks</li>
<li><i class="tri"></i><svg><use href="#home"/></svg>Home</li>
<li><i class="tri"></i><svg><use href="#folder"/></svg>C:\ (Windows)</li>
<li><i class="tri"></i><svg><use href="#folder"/></svg>D:\ (New Volume)</li>
<li><i class="tri"></i><svg><use href="#folder"/></svg>E:\ (New Volume)</li>
<li><i></i><svg><use href="#gpkg"/></svg>GeoPackage</li>
</ul>
<div class="vs"><i class="up"></i><span></span><i class="dn"></i></div>
<div class="hs"><i class="lf"></i><span></span><i class="rt"></i></div>
<div class="corner"></div>
</div>
</section>
<div class="dots">······</div>
<section class="dock layers">
<h2>Layers<span><svg><use href="#float"/></svg><svg><use href="#close"/></svg></span></h2>
<div class="tools"><b><svg><use href="#brush"/></svg></b><b><svg><use href="#group"/></svg></b><b><svg><use href="#eye"/></svg></b><b><svg><use href="#funneld"/></svg></b><b class="dd"><svg><use href="#eps"/></svg></b><b><svg><use href="#expa"/></svg></b><span class="more">»</span></div>
<div class="box layerlist"><div class="lrow"><span class="chk"><svg viewBox="0 0 12 12"><path d="M2.500 6l2.500 3.500L9.500 2" fill="none" stroke="#111" stroke-width="1.800"/></svg></span><svg><use href="#layer"/></svg><strong>DEMO_polygon</strong><svg class="mem"><use href="#mem"/></svg></div></div>
</section>
</aside>

<div class="canvas">
<svg viewBox="186 151 652 540">
<g fill="#d4b341" stroke="#4a4330" stroke-width="1">
<path d="M397.500 234L536 250 576 373 458 469 318.500 416.500 326 348.500z"/>
<path d="M641 285L774 283 776 490.500 640 489.500z"/>
<path d="M214 480L321 521.500 431 521.500 595 536 750.500 545 752.500 574 528 572 285 551.500 207.500 527.500z"/></g>
<circle cx="212" cy="486" r="19.500" fill="#f2f416" fill-opacity=".52"/>
<circle cx="220" cy="495" r="6.500" fill="#e8d98a" fill-opacity=".5" stroke="#111" stroke-width="1.600"/><path d="M220 486v7M220 497v7M211 495h7M222 495h7" stroke="#111" stroke-width="1.500"/>
</svg>
</div>

<aside class="right">
<section class="dock">
<h2>Processing Toolbox<span><svg><use href="#float"/></svg><svg><use href="#close"/></svg></span></h2>
<div class="tools"><b><svg><use href="#gears"/></svg></b><b><svg><use href="#pyd"/></svg></b><b><svg><use href="#clock"/></svg></b><b><svg><use href="#doc"/></svg></b><i class="sep"></i><b><svg><use href="#noted"/></svg></b><i class="sep"></i><b><svg><use href="#wrench"/></svg></b></div>
<div class="box input find"><svg><use href="#mag"/></svg>Search…</div>
<div class="box ptree">
<ul class="tree">
<li><i class="tri"></i><svg><use href="#clock"/></svg>Recently used</li>
<li><i class="tri"></i><svg><use href="#q"/></svg>Cartography</li>
<li><i class="tri"></i><svg><use href="#q"/></svg>Database</li>
<li><i class="tri"></i><svg><use href="#q"/></svg>File tools</li>
</ul>
<div class="vs"><i class="up"></i><span></span><i class="dn"></i></div>
</div>
</section>
<div class="dots">······</div>
<section class="dock qms">
<h2>Search QMS<span><svg><use href="#float"/></svg><svg><use href="#close"/></svg></span></h2>
<div class="box input str">Search string…</div>
<div class="filter"><button>Filter by extent</button><span class="combo all">All<i class="dn"></i></span></div>
<div class="box results"></div>
<div class="banner"><svg><use href="#bell"/></svg><p><a>Fresh geodata</a> for your project</p></div>
</section>
<div class="dots">······</div>
<section class="dock identify">
<h2>Identify Results<span><svg><use href="#float"/></svg><svg><use href="#close"/></svg></span></h2>
<div class="tools"><b><svg><use href="#dimtree"/></svg></b><i class="sep"></i><b><svg><use href="#expa"/></svg></b><b><svg><use href="#coll"/></svg></b><b><svg><use href="#expn"/></svg></b><i class="sep"></i><b><svg><use href="#desel"/></svg></b><i class="sep"></i><b class="pale"><svg><use href="#copy"/></svg></b><b class="pale"><svg><use href="#print"/></svg></b><i class="sep"></i><b class="dd"><svg><use href="#idsel"/></svg></b><b><svg><use href="#wrench"/></svg></b><i class="sep"></i><b><svg><use href="#help"/></svg></b></div>
<div class="box grid"><div class="ghead"><span>Feature</span><span>Value</span></div></div>
</section>
</aside>
</main>

<footer class="task">
<div class="apps"><span><svg><use href="#win"/></svg></span><span class="run"><svg><use href="#exp"/></svg></span><span class="run"><svg><use href="#ff"/></svg></span><span class="run"><svg><use href="#rec"/></svg></span><span><svg><use href="#earth"/></svg></span><span class="run cur"><svg><use href="#q"/></svg></span></div>
<div class="tray">
<svg viewBox="0 0 100 18"><path d="M2 12l5-5.500 5 5.500" fill="none" stroke="#222" stroke-width="1.300"/><rect x="25.500" y="2" width="6" height="9" rx="1" fill="#111"/><path d="M24 8v3q0 3 4.500 3T33 11V8M28.500 14v2M25.500 16.200h6" fill="none" stroke="#111"/><rect x="49" y="6" width="9.500" height="6" fill="#111" stroke="#111"/><path d="M59.500 7.500v3" stroke="#111" stroke-width="1.500"/><path d="M45 4v3M48 4v3M44 7h5q0 3-2.500 3T44 7M46.500 10v3h2" fill="none" stroke="#111"/><g fill="none" stroke="#444" stroke-width="1.200"><path d="M70 15Q72 5 81 4M73 15q1-7 8-8M76 15q1-4 5-5"/></g><circle cx="79.500" cy="14.500" r="1.500" fill="#111"/><path d="M89.500 7h2l3-3v10l-3-3h-2zM97 6.500q2 2.500 0 5M99 4.500q3 4.500 0 9M101.500 3q3.500 6 0 12" fill="none" stroke="#333" stroke-width="1.100"/></svg>
<span class="lang">ENG</span><span class="time">19:06</span>
<svg class="note" viewBox="0 0 18 18"><path d="M1.500 3h14v11h-4l-2.500 2.500V14H1.500z" fill="none" stroke="#333" stroke-width="1.300"/><circle cx="13" cy="13.500" r="2.500" fill="#333"/></svg>
</div>
</footer>
</div>
</body>
</html>
```
FILE: styles.css
```css
* { box-sizing: border-box; }
body { margin: 0; font: 11.500px/17px "Open Sans", "Noto Sans", sans-serif; letter-spacing: -.48px; color: #222; background: #efefef; overflow: hidden; }
svg { display: block; overflow: visible; flex: none; }
.sprite { width: 0; height: 0; overflow: hidden; }
b, i, em { font-weight: normal; font-style: normal; }
.app { width: 1280px; height: 720px; display: flex; flex-direction: column; }
.glyph { font: bold 11px "Liberation Sans", sans-serif; letter-spacing: 0; fill: #222; }
.gray { font-weight: normal; fill: #555; }
.tiny { font-size: 8px; }
.dim { fill: #aaa; }
.red { fill: #b51e1e; }
.serif { font: italic bold 16px "Liberation Serif", serif; }
.quest { font: 16px "Liberation Serif", serif; }
.white { fill: #fff; }
.big { font-size: 17px; fill: #000; }
.kml { font-size: 11px; fill: #000; }

.title { height: 22px; background: #fff; display: flex; align-items: center; padding: 0 14.500px 1px 2px; letter-spacing: -.45px; }
.title .q16 { width: 15px; height: 15px; margin-right: 5px; }
.winbtns { width: 100px; height: 20px; margin-left: auto; }
.menu { height: 18px; display: flex; padding-left: 9px; white-space: nowrap; letter-spacing: -.38px; }
.menu span { width: 48px; }
.menu u { text-underline-offset: 1px; }
.menu span:nth-child(2) { width: 32px; }
.menu span:nth-child(3) { width: 36px; }
.menu span:nth-child(4) { width: 39px; }
.menu span:nth-child(5) { width: 53px; }
.menu span:nth-child(6) { width: 50px; }
.menu span:nth-child(7) { width: 44px; }
.menu span:nth-child(8) { width: 43px; }
.menu span:nth-child(9) { width: 58px; }
.menu span:nth-child(10) { width: 36px; }
.menu span:nth-child(11) { width: 40px; }
.menu span:nth-child(12) { width: 32px; }
.menu span:nth-child(13) { width: 67px; }

.bar { height: 37px; display: flex; align-items: center; background: linear-gradient(#fbfbfb, #efefef); border-bottom: 1px solid #bdbdbd; flex: none; }
.bar b { width: 30.870px; height: 30px; display: flex; align-items: center; justify-content: center; flex: none; }
.bar b svg { width: 22px; height: 22px; }
.bar b.on { border: 1px solid #b5b5b5; border-radius: 2px; background: #dcdcdc; }
.bar b.dd { width: 42px; padding-left: 4px; justify-content: flex-start; }
.dd::after { content: ""; border: 3px solid transparent; border-top: 4px solid #555; border-bottom: 0; margin-left: 7px; }
.grip { width: 15.200px; height: 17px; flex: none; background: radial-gradient(circle, #c3c3c3 .7px, transparent 1.100px) center / 3px 3px; background-clip: content-box; padding: 0 5px; }
.grip.first { width: 11.600px; padding: 0 3px 0 4px; }
.grip.tight { width: 14.200px; }
.main .grip { width: 15.900px; }
.main .grip.first { width: 11.800px; }
.main .grip.tight { width: 14px; }
.main b.dd { width: 42px; }
.bar .sep { width: 7.200px; height: 20px; border-left: 1px solid #d0d0d0; flex: none; transform: translateX(3px); }
.scp { height: 36px; border-bottom: 1px solid #c4c4c4; padding-bottom: 1px; }
.scp b svg { width: 23px; height: 23px; }
.scp .store { margin-left: 1px; }
.faint { opacity: .45; }
.tag { height: 18px; background: #606060; color: #eee; display: flex; align-items: center; flex: none; font-size: 11px; letter-spacing: -.3px; white-space: nowrap; }
.tag em { width: 9px; height: 9px; border-radius: 50%; border: 2px solid #444; background: #aaa; margin: 0 7px 0 2px; }
.tag.rgb { margin-left: 1px; }
.tag.lab { background: #4b4b4b; color: #fff; font-weight: 600; padding-left: 2px; margin-right: 2px; }
.tag.lab.w9 { padding-left: 1px; }
.tag.lab.w24 { margin-left: 2px; }
.tag.lab.t { margin-left: 1px; }
.spin { height: 19px; background: #fff; border: 1px solid #b6b6b6; border-radius: 2px; display: flex; align-items: center; position: relative; padding-left: 3px; margin-right: 3px; flex: none; font-size: 11px; letter-spacing: -.35px; }
.spin::after { content: ""; width: 12px; align-self: stretch; margin-left: auto; border-left: 1px solid #ccc; background: linear-gradient(#f9f9f9, #e9e9e9); }
.spin::before { content: "▲\A▼"; white-space: pre; position: absolute; right: 3px; top: 1px; font: 6px/8px "DejaVu Sans", sans-serif; color: #444; z-index: 1; }
.spin:has(+ b) { margin-right: 1px; }
.w9 { width: 9px; } .w22 { width: 21px; } .w24 { width: 23px; } .w25 { width: 24px; } .w45 { width: 45px; } .w55 { width: 54.500px; } .w62 { width: 61px; } .w92 { width: 91px; }
.tag.w55 { width: 55px; }
.scp .lead { margin-left: 2px; }
.combo { width: 73px; height: 19px; margin-left: 2px; background: #fff; border: 1px solid #b6b6b6; border-radius: 2px; display: flex; align-items: center; padding-left: 3px; }
.scp .combo::before { content: ""; order: 1; margin-left: auto; align-self: stretch; border-left: 1px solid #ccc; }
.scp .combo i { order: 2; margin-left: 6px; }
.combo i { margin-left: auto; margin-right: 5px; }
.up, .dn { border: 3px solid transparent; width: 0; height: 0; }
.dn { border-top: 4px solid #555; border-bottom: 0; }
.up { border-bottom: 4px solid #555; border-top: 0; }
.more { font-size: 15px; color: #333; }
.scp .more { margin-left: 2px; }
.scp .w55:has(+ .more) { margin-left: 1px; }

.work { flex: 1; min-height: 0; display: flex; }
.left { width: 185px; padding-right: 6px; display: flex; flex-direction: column; }
.canvas { width: 654px; background: #fff; border: 1px solid #b3b3b3; border-bottom: 0; }
.canvas svg { width: 652px; height: 540px; }
.right { flex: 1; padding: 0 1px 0 5px; display: flex; flex-direction: column; min-width: 0; }
h2 { margin: 0; height: 19px; font: inherit; display: flex; justify-content: space-between; align-items: center; padding: 0 1px 2px 4px; letter-spacing: -.38px; }
h2 span { display: flex; gap: 2px; }
.right h2 { padding: 0 1px 2px 4px; }
h2 svg { width: 11px; height: 11px; }
.box { background: #fff; border: 1px solid #b9b9b9; }
.tools { display: flex; align-items: center; height: 28px; padding: 0 0 3px 2.500px; }
.tools b { width: 23.600px; display: flex; justify-content: center; align-items: center; flex: none; }
.tools b svg { width: 15px; height: 15px; }
.tools .sep { width: 6.500px; height: 12px; border-left: 1px solid #d2d2d2; transform: translateX(3px); flex: none; }
.tools b.dd { width: 35px; }
.tools b.dd::after { margin-left: 6px; }
.browser { height: 177px; }
.treebox { height: 131px; display: grid; grid-template: 118px 11px / 164px 13px; overflow: hidden; }
.tree { list-style: none; margin: 0; padding: 0; overflow: hidden; }
.tree li { display: flex; align-items: center; height: 16.900px; line-height: 16px; white-space: nowrap; }
.tree li svg { width: 15px; height: 15px; margin-right: 5px; }
.tree i { width: 18px; }
.tree .tri { width: 0; height: 0; border: 3px solid transparent; border-left: 4px solid #555; border-right: 0; margin-left: 6px; margin-right: 8px; }
.vs { border-left: 1px solid #c2c2c2; background: #dfdfdf; display: flex; flex-direction: column; align-items: center; justify-content: space-between; }
.vs .up, .vs .dn { box-sizing: content-box; margin: 4px 0; }
.vs span { width: 100%; height: 30px; background: #fafafa; border: 1px solid #c5c5c5; border-width: 1px 0; margin-bottom: 62px; }
.hs { border-top: 1px solid #c2c2c2; display: flex; align-items: center; justify-content: space-between; background: #eee; padding: 0 5px; }
.hs span { width: 136px; height: 100%; border: 1px solid #c5c5c5; border-width: 0 1px; background: #f9f9f9; }
.lf, .rt { border: 3px solid transparent; }
.lf { border-right: 4px solid #444; border-left: 0; }
.rt { border-left: 4px solid #444; border-right: 0; }
.corner { border: 1px solid #c2c2c2; border-width: 1px 0 0 1px; background: #eee; }
.dots { height: 6px; line-height: 4px; text-align: center; color: #aaa; font-size: 10px; letter-spacing: 0; flex: none; }
.layers { flex: 1; display: flex; flex-direction: column; }
.layers .tools { padding: 0 0 2px 3px; height: 28px; }
.layers .more { margin-left: auto; margin-right: 4px; line-height: 14px; }
.layerlist { flex: 1; border-bottom: 0; }
.lrow { height: 18px; background: #f0f0f0; display: flex; align-items: center; padding-left: 21px; }
.lrow > svg { width: 15px; height: 15px; }
.chk { width: 13px; height: 14px; background: #fff; margin-right: 6px; }
.chk svg { width: 13px; height: 13px; }
.lrow strong { font-weight: 700; text-decoration: underline; margin-left: 6px; letter-spacing: -.55px; }
.lrow .mem { margin-left: auto; margin-right: 5px; }
.right .tools { padding-left: 3px; }
.input { height: 20px; border-radius: 2px; display: flex; align-items: center; color: #888; letter-spacing: -.4px; }
.find { padding-left: 7px; }
.find svg { width: 13px; height: 13px; margin-right: 5px; }
.ptree { height: 65px; margin-top: 1px; display: grid; grid-template-columns: 1fr 13px; overflow: hidden; }
.ptree .tri { margin-left: 8px; margin-right: 10px; }
.ptree .tree, .ptree .vs { height: 63px; }
.ptree .vs span { height: 25px; margin-bottom: 10px; }
.ptree, .filter, .ghead { letter-spacing: -.4px; }
.right .dots { height: 5px; }
.qms h2 { height: 20px; padding-bottom: 3px; }
.str { padding-left: 1px; height: 19px; }
.filter { display: flex; justify-content: flex-end; height: 32px; padding-top: 6px; gap: 4px; }
button { width: 77px; height: 19px; padding: 0; font: inherit; letter-spacing: -.55px; color: inherit; border: 1px solid #b4b4b4; border-radius: 2px; background: linear-gradient(#fff, #f1f1f1); line-height: 16px; white-space: nowrap; margin-right: -1px; }
.all { width: 67px; height: 20px; background: linear-gradient(#fff, #eee); }
.results { height: 66px; }
.banner { height: 31px; margin-top: 4px; border: 1px solid #bdbdbd; display: flex; align-items: center; justify-content: center; padding-top: 2px; }
.banner svg { width: 11px; height: 12px; margin-right: 4px; }
.banner p { margin: 0; font-size: 11px; letter-spacing: -.5px; }
.banner a { color: #1d22bd; text-decoration: underline; }
.identify { flex: 1; display: flex; flex-direction: column; padding-top: 3px; }
.identify h2 { padding-bottom: 3px; }
.identify .tools { height: 26px; padding-bottom: 2px; }
.identify .pale { opacity: .6; }
.grid { flex: 1; border-bottom: 0; }
.ghead { height: 19px; display: flex; background: linear-gradient(#fff, #ededed); border-bottom: 1px solid #c6c6c6; }
.ghead span { width: 93px; padding-left: 2px; border-right: 1px solid #c6c6c6; line-height: 19px; }
.ghead span + span { border: 0; }

.task { height: 29px; flex: none; display: flex; justify-content: space-between; background: linear-gradient(90deg, #cfe5ea, #cfe1e9 50%, #d4dde8); border-bottom: 1px solid #28383d; }
.apps { display: flex; }
.apps span { width: 34px; height: 28px; margin-right: 1px; padding-top: 2px; display: flex; align-items: center; justify-content: center; border-bottom: 2px solid transparent; }
.apps span:nth-child(n+2) { width: 26px; margin-right: 8.700px; }
.apps span:first-child { margin-right: 6px; }
.apps svg { width: 16px; height: 16px; }
.apps .run { border-bottom-color: #0860a8; }
.apps span.cur { background: #edf6f8; width: 34px; margin-left: -4px; }
.tray { display: flex; align-items: center; padding-right: 21px; }
.tray svg { width: 100px; height: 18px; }
.tray .lang { margin-left: 13px; width: 34px; }
.tray .time { width: 42px; }
.tray .note { width: 18px; }
```
